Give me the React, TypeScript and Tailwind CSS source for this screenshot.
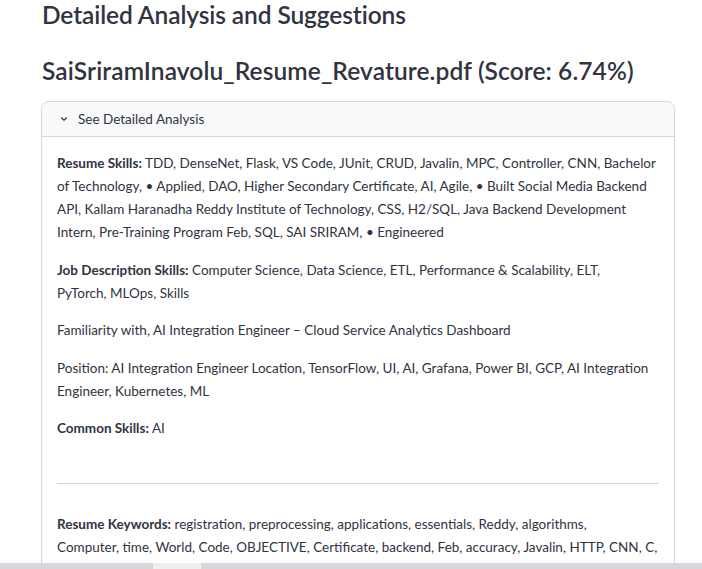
const skills = [
  {
    label: 'Resume Skills:',
    text: 'TDD, DenseNet, Flask, VS Code, JUnit, CRUD, Javalin, MPC, Controller, CNN, Bachelor of Technology, • Applied, DAO, Higher Secondary Certificate, AI, Agile, • Built Social Media Backend API, Kallam Haranadha Reddy Institute of Technology, CSS, H2/SQL, Java Backend Development Intern, Pre-Training Program Feb, SQL, SAI SRIRAM, • Engineered',
  },
  {
    label: 'Job Description Skills:',
    text: 'Computer Science, Data Science, ETL, Performance & Scalability, ELT,',
    rest: 'PyTorch, MLOps, Skills',
  },
  { label: '', text: 'Familiarity with, AI Integration Engineer – Cloud Service Analytics Dashboard' },
  {
    label: '',
    text: 'Position: AI Integration Engineer Location, TensorFlow, UI, AI, Grafana, Power BI, GCP, AI Integration Engineer, Kubernetes, ML',
  },
];

function Chevron() {
  return (
    <svg width="10" height="10" viewBox="0 0 24 24" fill="none" className="shrink-0">
      <path d="M6 9l6 6 6-6" stroke="#31333f" strokeWidth="2.6" strokeLinecap="round" strokeLinejoin="round" />
    </svg>
  );
}

export default function App() {
  return (
    <div className="relative h-[569px] overflow-hidden bg-white text-[#31333f] font-['Lato',sans-serif]">
      <div className="ml-[41px] w-[634px]">
        {/* Headings */}
        <h3 className="pl-[1px] text-[24.5px] font-semibold leading-[30px] tracking-[-0.1px]">
          Detailed Analysis and Suggestions
        </h3>
        <h3 className="mt-[26px] pl-[1px] text-[24.5px] font-semibold leading-[30px] tracking-[0.1px]">
          SaiSriramInavolu_Resume_Revature.pdf (Score: 6.74%)
        </h3>

        {/* Expander */}
        <div className="mt-[15px] rounded-lg border border-[#d6d6d9]">
          <div className="flex h-[35px] items-center gap-[9px] rounded-t-lg border-b border-[#d6d6d9] bg-[#f8f9fb] pl-[17px] text-[13.5px]">
            <Chevron />
            <span>See Detailed Analysis</span>
          </div>

          <div className="px-[15px] pt-[15px] text-[13.5px] leading-[23px]">
            {skills.map((s, i) => (
              <p key={i} className="mb-[14.5px]">
                {s.label && <b className="font-bold">{s.label}</b>}
                {s.label && ' '}
                {s.text}
                {s.rest && (
                  <>
                    <br />
                    {s.rest}
                  </>
                )}
              </p>
            ))}
            <p>
              <b className="font-bold">Common Skills:</b> AI
            </p>

            <hr className="mt-[43px] mb-[29px] border-[#d6d6d9]" />

            <p>
              <b className="font-bold">Resume Keywords:</b> registration, preprocessing, applications, essentials, Reddy,
              algorithms,
              <br />
              Computer, time, World, Code, OBJECTIVE, Certificate, backend, Feb, accuracy, Javalin, HTTP, CNN, C, Java,
              Python, SQL, Spring, React, analytics, deployment, testing
            </p>
          </div>
        </div>
      </div>

      {/* horizontal scrollbar overlay */}
      <div className="absolute bottom-0 left-0 right-0 h-[6px] bg-[#d6d8db]">
        <div className="absolute left-[153px] top-0 h-full w-[48px] bg-[#efefef]" />
      </div>
    </div>
  );
}
